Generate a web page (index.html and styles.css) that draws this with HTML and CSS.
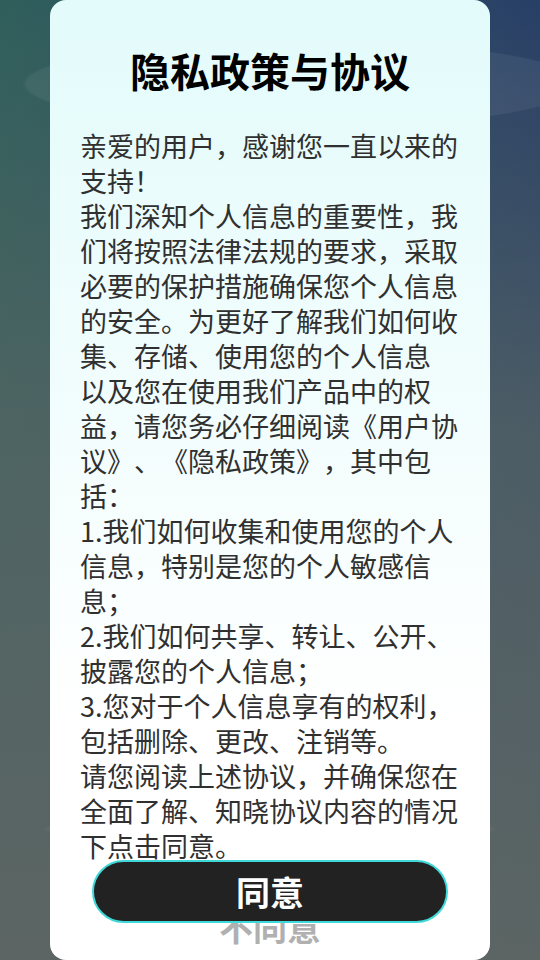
FILE: index.html
```html
<!DOCTYPE html>
<html lang="zh-CN">
<head>
  <meta charset="UTF-8">
  <meta name="viewport" content="width=device-width, initial-scale=1.0">
  <title>隐私政策与协议</title>
  <link rel="stylesheet" href="styles.css">
</head>
<body>
  <div class="dialog">
    <h1 class="dialog-title">隐私政策与协议</h1>
    <p class="dialog-text">
      亲爱的用户，感谢您一直以来的<br>
      支持！<br>
      我们深知个人信息的重要性，我<br>
      们将按照法律法规的要求，采取<br>
      必要的保护措施确保您个人信息<br>
      的安全。为更好了解我们如何收<br>
      集、存储、使用您的个人信息<br>
      以及您在使用我们产品中的权<br>
      益，请您务必仔细阅读《用户协<br>
      议》、《隐私政策》，其中包<br>
      括：<br>
      1.我们如何收集和使用您的个人<br>
      信息，特别是您的个人敏感信<br>
      息；<br>
      2.我们如何共享、转让、公开、<br>
      披露您的个人信息；<br>
      3.您对于个人信息享有的权利，<br>
      包括删除、更改、注销等。<br>
      请您阅读上述协议，并确保您在<br>
      全面了解、知晓协议内容的情况<br>
      下点击同意。
    </p>
    <button class="btn-agree" id="agree">同意</button>
    <div class="btn-refuse" id="refuse">不同意</div>
  </div>
</body>
</html>
```

FILE: styles.css
```css
html, body {
  margin: 0;
  height: 100%;
}
body {
  font-family: "Noto Sans CJK SC", "Noto Sans", sans-serif;
  background:
    radial-gradient(ellipse 280px 44px at 302px 84px, rgba(255, 255, 255, 0.06) 98%, rgba(255, 255, 255, 0) 100%),
    radial-gradient(ellipse 226px 17px at 270px 829px, rgba(190, 140, 140, 0.14) 97%, rgba(190, 140, 140, 0) 100%),
    linear-gradient(to bottom, rgba(92, 101, 100, 0) 0%, rgba(88, 102, 101, 0.75) 45%, #5c6564 100%),
    linear-gradient(to right, #2f5f5b 0%, #2c4a66 70%, #283f66 100%);
  overflow: hidden;
}
.dialog {
  margin: 0 50px;
  height: 960px;
  box-sizing: border-box;
  padding: 40px 30px 0;
  border-radius: 16px;
  background: linear-gradient(to bottom, #e3fbfb 0%, #f3fdfd 45%, #ffffff 75%);
  display: flex;
  flex-direction: column;
}
.dialog-title {
  margin: 0;
  font-size: 40px;
  line-height: 60px;
  font-weight: bold;
  color: #000;
  text-align: center;
}
.dialog-text {
  margin: 28px 0 0;
  font-size: 27px;
  line-height: 35px;
  color: #303030;
  white-space: nowrap;
  text-spacing-trim: space-all;
  font-kerning: none;
}
.btn-agree {
  position: relative;
  z-index: 1;
  align-self: center;
  width: 356px;
  height: 63px;
  margin-top: -3px;
  background-color: #222;
  border: 2px solid #3fd8d8;
  border-radius: 32px;
  color: #fff;
  font-family: inherit;
  font-size: 34px;
  font-weight: bold;
  line-height: 1;
  cursor: pointer;
}
.btn-refuse {
  margin-top: -16px;
  font-size: 34px;
  line-height: 40px;
  font-weight: bold;
  color: #b0b0b0;
  text-align: center;
  cursor: pointer;
}
```
